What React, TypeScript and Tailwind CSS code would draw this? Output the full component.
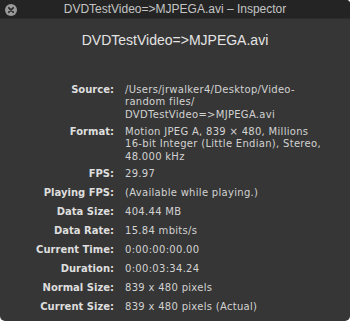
import React from "react";

const rows: { label: string; lines: string[] }[] = [
  { label: "Source:", lines: ["/Users/jrwalker4/Desktop/Video-", "random files/", "DVDTestVideo=>MJPEGA.avi"] },
  { label: "Format:", lines: ["Motion JPEG A, 839 × 480, Millions", "16-bit Integer (Little Endian), Stereo,", "48.000 kHz"] },
  { label: "FPS:", lines: ["29.97"] },
  { label: "Playing FPS:", lines: ["(Available while playing.)"] },
  { label: "Data Size:", lines: ["404.44 MB"] },
  { label: "Data Rate:", lines: ["15.84 mbits/s"] },
  { label: "Current Time:", lines: ["0:00:00:00.00"] },
  { label: "Duration:", lines: ["0:00:03:34.24"] },
  { label: "Normal Size:", lines: ["839 x 480 pixels"] },
  { label: "Current Size:", lines: ["839 x 480 pixels (Actual)"] },
];

export default function App() {
  return (
    <div className="w-[350px] h-[321px] bg-white">
      <div className="w-[350px] h-[321px] bg-[#363636] rounded-tr-[4px] rounded-b-[5px] overflow-hidden flex flex-col">
        <div className="relative h-[18px] bg-[#242424] flex items-center justify-center shrink-0">
          <div className="absolute left-[5px] top-[4px] w-[12px] h-[12px] rounded-full bg-[#9a9a9a] flex items-center justify-center">
            <svg width="12" height="12" viewBox="0 0 12 12">
              <path d="M3.8 3.8 L8.2 8.2 M8.2 3.8 L3.8 8.2" stroke="#2e2e2e" strokeWidth="1.8" strokeLinecap="round" />
            </svg>
          </div>
          <span
            className="text-[12px] leading-[18px] text-[#c4c4c4]"
            style={{ fontFamily: '"Liberation Sans", Arial, sans-serif' }}
          >
            DVDTestVideo=&gt;MJPEGA.avi – Inspector
          </span>
        </div>
        <div className="h-px bg-[#2c2c2c] shrink-0" />
        <div
          className="text-center text-[14px] leading-[18px] text-[#e4e4e4] mt-[12px]"
          style={{ fontFamily: '"Liberation Sans", Arial, sans-serif' }}
        >
          DVDTestVideo=&gt;MJPEGA.avi
        </div>
        <div
          className="flex flex-col gap-[4px] mt-[34px] text-[10px]"
          style={{ fontFamily: '"DejaVu Sans", Verdana, sans-serif' }}
        >
          {rows.map((r) => (
            <div key={r.label} className="flex min-h-[15px]">
              <div className="w-[114px] shrink-0 text-right font-bold text-[#dedede] leading-[12.33px] pt-[1px]">
                {r.label}
              </div>
              <div className="ml-[11px] text-[#d2d2d2] leading-[12.33px] pt-[1px] tracking-[0.3px]">
                {r.lines.map((l, i) => (
                  <div key={i} className="whitespace-nowrap">{l}</div>
                ))}
              </div>
            </div>
          ))}
        </div>
      </div>
    </div>
  );
}
